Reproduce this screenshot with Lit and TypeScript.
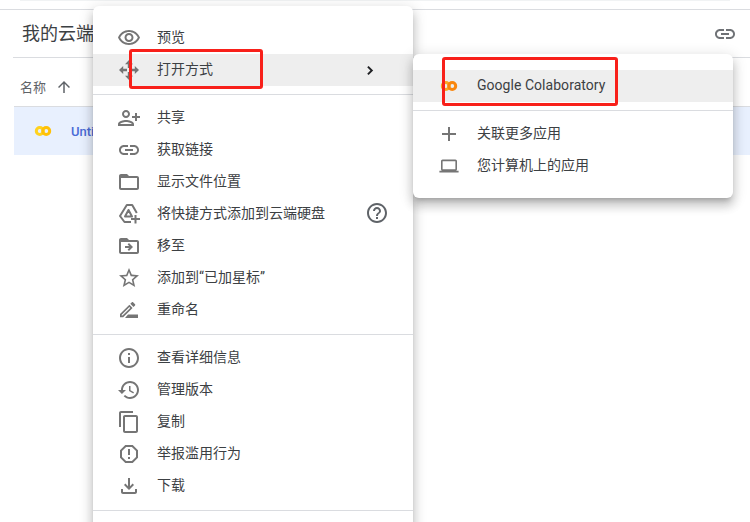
import { LitElement, html, css, svg } from 'lit';
import { customElement } from 'lit/decorators.js';

const icons: Record<string, any> = {
  eye: svg`<path d="M12 6c3.79 0 7.17 2.13 8.82 5.5C19.17 14.87 15.79 17 12 17s-7.17-2.13-8.82-5.5C4.83 8.13 8.21 6 12 6m0-2C7 4 2.73 7.11 1 11.5 2.73 15.89 7 19 12 19s9.27-3.11 11-7.5C21.27 7.11 17 4 12 4zm0 5c1.38 0 2.5 1.12 2.5 2.5S13.38 14 12 14s-2.5-1.12-2.5-2.5S10.62 9 12 9m0-2c-2.48 0-4.5 2.02-4.5 4.5S9.52 16 12 16s4.5-2.02 4.5-4.5S14.48 7 12 7z"/>`,
  move: svg`<path d="M12 2l4 4.2h-2.8V10h-2.4V6.2H8zM12 22l-4-4.2h2.8V14h2.4v3.8H16zM2 12l4.2-4v2.8H10v2.4H6.2V16zM22 12l-4.2 4v-2.8H14v-2.4h3.8V8z"/>`,
  share: svg`<path transform="matrix(-1 0 0 1 24 0)" d="M15 12c2.21 0 4-1.79 4-4s-1.79-4-4-4-4 1.79-4 4 1.79 4 4 4zm0-6c1.1 0 2 .9 2 2s-.9 2-2 2-2-.9-2-2 .9-2 2-2zm0 8c-2.67 0-8 1.34-8 4v2h16v-2c0-2.66-5.33-4-8-4zm-6 4c.22-.72 3.31-2 6-2 2.7 0 5.8 1.29 6 2H9zm-3-3v-3h3v-2H6V7H4v3H1v2h3v3h2z"/>`,
  link: svg`<path d="M3.9 12c0-1.71 1.39-3.1 3.1-3.1h4V7H7c-2.76 0-5 2.24-5 5s2.24 5 5 5h4v-1.9H7c-1.71 0-3.1-1.39-3.1-3.1zM8 13h8v-2H8v2zm9-6h-4v1.9h4c1.71 0 3.1 1.39 3.1 3.1s-1.39 3.1-3.1 3.1h-4V17h4c2.76 0 5-2.24 5-5s-2.24-5-5-5z"/>`,
  folder: svg`<path d="M20 6h-8l-2-2H4c-1.1 0-2 .9-2 2v12c0 1.1.9 2 2 2h16c1.1 0 2-.9 2-2V8c0-1.1-.9-2-2-2zm0 12H4V8h16v10z"/>`,
  shortcut: svg`<path fill="none" stroke="currentColor" stroke-width="2" stroke-linejoin="round" d="M14 20H7.5L3 14 9.8 3h5.4l4.6 8"/><path fill="none" stroke="currentColor" stroke-width="2" stroke-linejoin="round" d="M8 14.5l3.5-6.5 3.5 6.5z"/><path d="M17.5 13h2v3H23v2h-3.5v3.5h-2V18H14v-2h3.5z"/>`,
  moveTo: svg`<path d="M20 6h-8l-2-2H4c-1.1 0-2 .9-2 2v12c0 1.1.9 2 2 2h16c1.1 0 2-.9 2-2V8c0-1.1-.9-2-2-2zm0 12H4V8h16v10zm-8.01-9l-1.41 1.41L12.16 12H8v2h4.16l-1.59 1.59L11.99 17 16 13.01 11.99 9z"/>`,
  star: svg`<path d="M22 9.24l-7.19-.62L12 2 9.19 8.63 2 9.24l5.46 4.73L5.82 21 12 17.27 18.18 21l-1.63-7.03L22 9.24zM12 15.4l-3.76 2.27 1-4.28-3.32-2.88 4.38-.38L12 6.1l1.71 4.04 4.38.38-3.32 2.88 1 4.28L12 15.4z"/>`,
  rename: svg`<path transform="translate(.45 1.45) scale(.85)" d="M14.06 9.02l.92.92L5.92 19H5v-.92l9.06-9.06M17.66 3c-.25 0-.51.1-.7.29l-1.83 1.83 3.75 3.75 1.83-1.83c.39-.39.39-1.02 0-1.41l-2.34-2.34c-.2-.2-.45-.29-.71-.29zm-3.6 3.19L3 17.25V21h3.75L17.81 9.94l-3.75-3.75z"/><path d="M11 16.5h10v3.5H8z"/>`,
  help: svg`<path d="M11 18h2v-2h-2v2zm1-16C6.48 2 2 6.48 2 12s4.48 10 10 10 10-4.48 10-10S17.52 2 12 2zm0 18c-4.41 0-8-3.59-8-8s3.59-8 8-8 8 3.59 8 8-3.59 8-8 8zm0-14c-2.21 0-4 1.79-4 4h2c0-1.1.9-2 2-2s2 .9 2 2c0 2-3 1.75-3 5h2c0-2.25 3-2.5 3-5 0-2.21-1.79-4-4-4z"/>`,
  info: svg`<path d="M11 7h2v2h-2zm0 4h2v6h-2zm1-9C6.48 2 2 6.48 2 12s4.48 10 10 10 10-4.48 10-10S17.52 2 12 2zm0 18c-4.41 0-8-3.59-8-8s3.59-8 8-8 8 3.59 8 8-3.59 8-8 8z"/>`,
  history: svg`<path d="M13 3c-4.97 0-9 4.03-9 9H1l3.89 3.89.07.14L9 12H6c0-3.87 3.13-7 7-7s7 3.13 7 7-3.13 7-7 7c-1.93 0-3.68-.79-4.94-2.06l-1.42 1.42C8.27 19.99 10.51 21 13 21c4.97 0 9-4.03 9-9s-4.03-9-9-9zm-1 5v5l4.28 2.54.72-1.21-3.5-2.08V8H12z"/>`,
  copy: svg`<path d="M16 1H4c-1.1 0-2 .9-2 2v14h2V3h12V1zm3 4H8c-1.1 0-2 .9-2 2v14c0 1.1.9 2 2 2h11c1.1 0 2-.9 2-2V7c0-1.1-.9-2-2-2zm0 16H8V7h11v14z"/>`,
  report: svg`<path d="M15.73 3H8.27L3 8.27v7.46L8.27 21h7.46L21 15.73V8.27L15.73 3zM19 14.9L14.9 19H9.1L5 14.9V9.1L9.1 5h5.8L19 9.1v5.8z"/><path d="M11 7h2v6h-2zm0 8h2v2h-2z"/>`,
  download: svg`<path d="M18 15v3H6v-3H4v3c0 1.1.9 2 2 2h12c1.1 0 2-.9 2-2v-3h-2zm-1-4l-1.41-1.41L13 12.17V4h-2v8.17L8.41 9.59 7 11l5 5 5-5z"/>`,
  plus: svg`<path d="M19 13h-6v6h-2v-6H5v-2h6V5h2v6h6v2z"/>`,
  laptop: svg`<path transform="translate(2.4 2.4) scale(.8)" d="M20 18c1.1 0 1.99-.9 1.99-2L22 6c0-1.1-.9-2-2-2H4c-1.1 0-2 .9-2 2v10c0 1.1.9 2 2 2H0v2h24v-2h-4zM4 6h16v10H4V6z"/>`,
  up: svg`<path d="M4 12l1.41 1.41L11 7.83V20h2V7.83l5.58 5.59L20 12l-8-8-8 8z"/>`,
  chevron: svg`<path d="M7 5 10 2l10 10-10 10-3-3 7-7z"/>`,
};

const icon = (name: string, cls = 'icon') =>
  html`<svg class=${cls} viewBox="0 0 24 24" fill="currentColor">${icons[name]}</svg>`;

const colabLogo = (left: string, right: string) => html`<svg class="icon" viewBox="0 0 24 24" fill="none" stroke-width="3">
  <circle cx="8.8" cy="12" r="3.5" stroke=${left}></circle><circle cx="15.2" cy="12" r="3.5" stroke=${right}></circle>
</svg>`;

const groups = [
  [{ i: 'eye', t: '预览' }, { i: 'move', t: '打开方式', active: true, more: true }],
  [
    { i: 'share', t: '共享' },
    { i: 'link', t: '获取链接' },
    { i: 'folder', t: '显示文件位置' },
    { i: 'shortcut', t: '将快捷方式添加到云端硬盘', help: true },
    { i: 'moveTo', t: '移至' },
    { i: 'star', t: '添加到“已加星标”' },
    { i: 'rename', t: '重命名' },
  ],
  [
    { i: 'info', t: '查看详细信息' },
    { i: 'history', t: '管理版本' },
    { i: 'copy', t: '复制' },
    { i: 'report', t: '举报滥用行为' },
    { i: 'download', t: '下载' },
  ],
];

@customElement('app-root')
export class AppRoot extends LitElement {
  static styles = css`
    :host {
      display: block;
      font-family: Roboto, 'Noto Sans CJK SC', sans-serif;
    }
    .page {
      position: relative;
      width: 750px;
      height: 522px;
      overflow: hidden;
      background: #fff;
    }
    .topbar {
      height: 9px;
      border-bottom: 1px solid #dadce0;
    }
    .topbar div {
      height: 1px;
      margin: 0 20px;
      background: #f1f3f4;
    }
    .head {
      height: 47px;
      margin-left: 13px;
      padding: 0 13px 0 9px;
      display: flex;
      align-items: center;
      justify-content: space-between;
      border-bottom: 1px solid #dadce0;
      font-size: 18px;
      color: #3c4043;
    }
    .head span {
      margin-bottom: 4px;
    }
    .head .icon {
      color: #6f7276;
    }
    .cols {
      height: 48px;
      box-sizing: border-box;
      padding-top: 9px;
      margin-left: 20px;
      display: flex;
      align-items: center;
      gap: 9px;
      font-size: 13px;
      color: #5f6368;
    }
    .cols .up {
      width: 18px;
      height: 18px;
    }
    .row {
      height: 48px;
      margin-left: 14px;
      padding-left: 17px;
      display: flex;
      align-items: center;
      gap: 16px;
      background: #e8f0fe;
      border-top: 1px solid #dadce0;
      font-size: 13px;
      font-weight: 500;
      color: #4a6bd6;
    }
    .menu {
      position: absolute;
      left: 93px;
      top: 6px;
      width: 320px;
      height: 600px;
      box-sizing: border-box;
      padding-top: 16px;
      background: #fff;
      border-radius: 6px;
      box-shadow: 0 8px 10px 1px rgba(0, 0, 0, 0.14), 0 3px 14px 2px rgba(0, 0, 0, 0.12),
        0 5px 5px -3px rgba(0, 0, 0, 0.2);
    }
    .sub {
      left: 413px;
      top: 54px;
      height: 144px;
    }
    .group {
      padding-bottom: 8px;
      margin-bottom: 7px;
      border-bottom: 1px solid #dadce0;
    }
    .item {
      height: 32px;
      padding: 0 24px;
      display: flex;
      align-items: center;
      gap: 16px;
      font-size: 14px;
      color: #3c4043;
    }
    .item.active {
      background: #eeeeee;
    }
    .item > .icon:first-child {
      color: #757575;
    }
    .icon {
      width: 24px;
      height: 24px;
      flex: none;
    }
    .label {
      flex: 1;
      white-space: nowrap;
      margin-top: -4px;
    }
    .label.latin {
      letter-spacing: 0.04px;
      margin-top: -2px;
    }
    .chev {
      width: 11px;
      height: 11px;
      margin-right: 14px;
      color: #202124;
    }
    .help {
      color: #5f6368;
      margin-top: -3px;
    }
    .mark {
      position: absolute;
      border: 3px solid #f8201a;
      border-radius: 3px;
      box-sizing: border-box;
    }
    .mark.open {
      left: 129px;
      top: 49px;
      width: 134px;
      height: 40px;
    }
    .mark.colab {
      left: 442px;
      top: 57px;
      width: 176px;
      height: 49px;
    }
  `;

  render() {
    return html`
      <div class="page">
        <div class="topbar"><div></div></div>
        <div class="head">
          <span>我的云端硬盘</span>
          ${icon('link')}
        </div>
        <div class="cols"><span>名称</span>${icon('up', 'up')}</div>
        <div class="row">${colabLogo('#ffd21f', '#ffc107')}<span>Untitled0.ipynb</span></div>

        <div class="menu">
          ${groups.map(
            (items) => html`
              <div class="group">
                ${items.map(
                  (it: any) => html`
                    <div class="item ${it.active ? 'active' : ''}">
                      ${icon(it.i)}
                      <span class="label">${it.t}</span>
                      ${it.more ? icon('chevron', 'chev') : ''}
                      ${it.help ? icon('help', 'icon help') : ''}
                    </div>
                  `
                )}
              </div>
            `
          )}
        </div>

        <div class="menu sub">
          <div class="group">
            <div class="item active">
              ${colabLogo('#f9a825', '#f9860d')}
              <span class="label latin">Google Colaboratory</span>
            </div>
          </div>
          <div class="item">${icon('plus')}<span class="label">关联更多应用</span></div>
          <div class="item">${icon('laptop')}<span class="label">您计算机上的应用</span></div>
        </div>

        <div class="mark open"></div>
        <div class="mark colab"></div>
      </div>
    `;
  }
}
